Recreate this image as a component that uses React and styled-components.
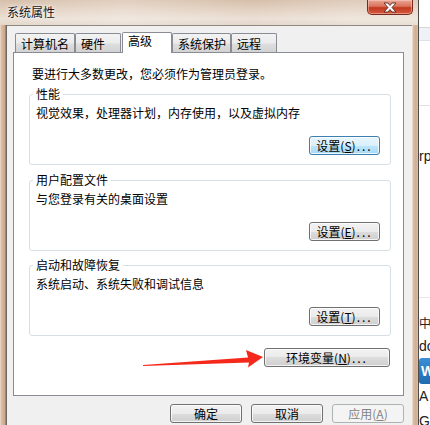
import React from "react";
import styled, { createGlobalStyle } from "styled-components";

const GlobalStyle = createGlobalStyle`
  html, body {
    margin: 0;
    padding: 0;
  }
  body {
    width: 430px;
    height: 425px;
    overflow: hidden;
    background: #fff;
    font-family: "Noto Sans CJK SC", "Noto Sans", sans-serif;
    font-size: 12px;
    color: #000;
  }
`;

const Screen = styled.div`
  position: relative;
  display: flex;
  width: 430px;
  height: 425px;
  overflow: hidden;
`;

const Window = styled.div`
  width: 419px;
  height: 425px;
  display: flex;
  flex-direction: column;
  border-right: 1px solid #4e4a47;
  box-sizing: border-box;
`;

const TitleBar = styled.div`
  height: 25px;
  box-sizing: border-box;
  display: flex;
  justify-content: space-between;
  align-items: flex-start;
  padding-left: 7px;
  background: linear-gradient(
      90deg,
      rgba(255, 255, 255, 0) 0%,
      rgba(255, 255, 255, 0.25) 30%,
      rgba(255, 255, 255, 0) 60%,
      rgba(255, 255, 255, 0.2) 85%
    ),
    linear-gradient(180deg, #d6bfaa 0%, #e3d1c1 40%, #ebe0d6 75%, #e4d6c9 100%);
`;

const Title = styled.div`
  margin-top: 4px;
  line-height: 16px;
  font-size: 12px;
  color: #151515;
  text-shadow: 0 0 5px rgba(255, 255, 255, 0.95), 0 0 2px rgba(255, 255, 255, 0.9);
`;

const CloseButton = styled.div`
  width: 46px;
  height: 15px;
  margin-right: 5px;
  box-sizing: border-box;
  border: 1px solid #7a2a1c;
  border-top: none;
  border-radius: 0 0 5px 5px;
  background: linear-gradient(180deg, #e9a594 0%, #d9735c 45%, #c2391f 55%, #d35a3c 100%);
  box-shadow: inset 0 0 0 1px rgba(255, 220, 210, 0.45);
  display: flex;
  align-items: center;
  justify-content: center;
`;

const Body = styled.div`
  flex: 1;
  display: flex;
`;

const LeftFrame = styled.div`
  width: 7px;
  background: linear-gradient(90deg, #ead8c8 0px, #d6b79d 2px, #cba88c 5px, #6e6862 6px, #6e6862 7px);
`;

const RightFrame = styled.div`
  width: 6px;
  background: linear-gradient(90deg, #f4ede6 0px, #dcc0a8 1px, #cfae93 4px, #d9bea6 6px);
`;

const Client = styled.div`
  width: 405px;
  box-sizing: border-box;
  background: #f0f0f0;
  border-top: 1px solid #8f8882;
  padding: 6px 0 0 6px;
  display: flex;
  flex-direction: column;
`;

const TabRow = styled.div`
  height: 20px;
  display: flex;
  align-items: flex-end;
  padding-left: 2px;
`;

const Tab = styled.div`
  width: ${(p) => p.$w}px;
  height: ${(p) => (p.$active ? 21 : 19)}px;
  box-sizing: border-box;
  margin-left: ${(p) => (p.$active ? 1 : 0)}px;
  margin-bottom: ${(p) => (p.$active ? -1 : 0)}px;
  position: ${(p) => (p.$active ? "relative" : "static")};
  z-index: ${(p) => (p.$active ? 1 : 0)};
  border: 1px solid #898c95;
  border-bottom: none;
  border-radius: 2px 2px 0 0;
  padding: ${(p) => (p.$active ? "0 0 0 5px" : "2px 0 0 5px")};
  line-height: 16px;
  white-space: nowrap;
  background: ${(p) =>
    p.$active ? "#fff" : "linear-gradient(180deg, #f3f3f3 0%, #ebebeb 50%, #dedede 55%, #d2d2d2 100%)"};
`;

const Panel = styled.div`
  width: 391px;
  height: 344px;
  box-sizing: border-box;
  border: 1px solid #898c95;
  background: #fff;
  padding: 13px 12px 0 15px;
  display: flex;
  flex-direction: column;
`;

const Intro = styled.div`
  line-height: 16px;
  margin-left: 3px;
`;

const Group = styled.fieldset`
  margin: ${(p) => p.$top}px 0 0 0;
  padding: 5px 10px 9px 6px;
  border: 1px solid #d5dfe5;
  border-radius: 3px;
  min-width: 0;
  display: flex;
  flex-direction: column;
`;

const GroupLabel = styled.legend`
  padding: 0 3px;
  margin-left: -3px;
  line-height: 12px;
  font-size: 12px;
`;

const GroupText = styled.div`
  line-height: 16px;
`;

const Button = styled.div`
  width: ${(p) => p.$w}px;
  height: 19px;
  box-sizing: border-box;
  border: 1px solid ${(p) => (p.$focus ? "#3c7fb1" : p.$disabled ? "#adb2b5" : "#707070")};
  border-radius: 3px;
  background: ${(p) =>
    p.$disabled
      ? "#f4f4f4"
      : p.$focus
      ? "linear-gradient(180deg, #eaf6fd 0%, #d9f0fc 50%, #bee6fd 50%, #a7d9f5 100%)"
      : "linear-gradient(180deg, #f2f2f2 0%, #ebebeb 50%, #dddddd 50%, #cfcfcf 100%)"};
  box-shadow: inset 0 0 0 1px ${(p) => (p.$disabled ? "#f4f4f4" : "rgba(255, 255, 255, 0.75)")};
  color: ${(p) => (p.$disabled ? "#838383" : "#000")};
  display: flex;
  align-items: center;
  justify-content: center;
  line-height: 17px;
  white-space: nowrap;
  align-self: ${(p) => (p.$end ? "flex-end" : "auto")};
  margin-top: ${(p) => p.$mt || 0}px;
  margin-right: ${(p) => p.$mr || 0}px;
`;

const Key = styled.span`
  text-decoration: underline;
`;

const Dots = styled.span`
  letter-spacing: 2px;
  margin-left: 1px;
`;

const Footer = styled.div`
  width: 391px;
  margin-top: 8px;
  display: flex;
  justify-content: flex-end;
  gap: 9px;
`;

const Arrow = styled.svg`
  position: absolute;
  left: 140px;
  top: 345px;
`;

const PageStrip = styled.div`
  width: 11px;
  height: 425px;
  background: #fff;
  display: flex;
  flex-direction: column;
  overflow: hidden;
  font-family: "Liberation Sans", Arial, sans-serif;
  font-size: 14px;
  color: #222;
`;

const StripBand = styled.div`
  height: ${(p) => p.$h}px;
  margin-top: ${(p) => p.$mt}px;
  background: ${(p) => p.$bg};
  flex-shrink: 0;
`;

const StripText = styled.div`
  margin-top: ${(p) => p.$mt}px;
  line-height: 16px;
  white-space: nowrap;
  color: ${(p) => p.$color || "#222"};
  font-family: ${(p) => (p.$cjk ? '"Noto Sans CJK SC", sans-serif' : "inherit")};
  font-size: ${(p) => (p.$cjk ? 12 : 14)}px;
`;

const StripIcon = styled.div`
  margin-top: ${(p) => p.$mt}px;
  width: 14px;
  height: 26px;
  border-radius: 3px;
  background: linear-gradient(180deg, #3a8fd6 0%, #1f6bb0 100%);
  color: #fff;
  font-weight: bold;
  font-size: 14px;
  line-height: 26px;
  padding-left: 2px;
  box-sizing: border-box;
  flex-shrink: 0;
`;

const Label = ({ text, k }) => (
  <>
    {text}(<Key>{k}</Key>)<Dots>...</Dots>
  </>
);

const tabs = [
  { name: "计算机名", w: 60 },
  { name: "硬件", w: 46 },
  { name: "高级", w: 50, active: true },
  { name: "系统保护", w: 59 },
  { name: "远程", w: 46 },
];

const App = () => {
  return (
    <Screen>
      <GlobalStyle />
      <Window>
        <TitleBar>
          <Title>系统属性</Title>
          <CloseButton>
            <svg width="16" height="11" viewBox="0 0 16 11">
              <path
                d="M2 1 L6 1 L8 3.5 L10 1 L14 1 L10 5.5 L14 10 L10 10 L8 7.5 L6 10 L2 10 L6 5.5 Z"
                fill="#fff"
                stroke="#5a2a22"
                strokeWidth="0.9"
                strokeLinejoin="round"
              />
            </svg>
          </CloseButton>
        </TitleBar>
        <Body>
          <LeftFrame />
          <Client>
            <TabRow>
              {tabs.map((t) => (
                <Tab key={t.name} $w={t.w} $active={t.active}>
                  {t.name}
                </Tab>
              ))}
            </TabRow>
            <Panel>
              <Intro>要进行大多数更改，您必须作为管理员登录。</Intro>
              <Group $top={6}>
                <GroupLabel>性能</GroupLabel>
                <GroupText>视觉效果，处理器计划，内存使用，以及虚拟内存</GroupText>
                <Button $w={71} $end $mt={15} $focus>
                  <Label text="设置" k="S" />
                </Button>
              </Group>
              <Group $top={9}>
                <GroupLabel>用户配置文件</GroupLabel>
                <GroupText>与您登录有关的桌面设置</GroupText>
                <Button $w={71} $end $mt={15}>
                  <Label text="设置" k="E" />
                </Button>
              </Group>
              <Group $top={8}>
                <GroupLabel>启动和故障恢复</GroupLabel>
                <GroupText>系统启动、系统失败和调试信息</GroupText>
                <Button $w={71} $end $mt={15}>
                  <Label text="设置" k="T" />
                </Button>
              </Group>
              <Button $w={126} $end $mt={12} $mr={1}>
                <Label text="环境变量" k="N" />
              </Button>
            </Panel>
            <Footer>
              <Button $w={72}>确定</Button>
              <Button $w={72}>取消</Button>
              <Button $w={72} $disabled>
                应用(<Key>A</Key>)
              </Button>
            </Footer>
          </Client>
          <RightFrame />
        </Body>
      </Window>
      <PageStrip>
        <StripBand $h={1} $mt={27} $bg="#d6d6d6" />
        <StripBand $h={12} $mt={0} $bg="#eef2f6" />
        <StripBand $h={1} $mt={0} $bg="#dde3ea" />
        <StripBand $h={1} $mt={64} $bg="#e2e2e2" />
        <StripText $mt={42}>rp</StripText>
        <StripBand $h={1} $mt={133} $bg="#e6e6e6" />
        <StripText $mt={17} $cjk>中</StripText>
        <StripText $mt={7}>do</StripText>
        <StripIcon $mt={4}>W</StripIcon>
        <StripText $mt={4}>A</StripText>
        <StripText $mt={9}>G</StripText>
      </PageStrip>
      <Arrow width="130" height="26" viewBox="0 0 130 26">
        <polygon
          points="3,20 108,12.5 106,5 123,12 108,22.5 109,17.5 3,21"
          fill="#f5291b"
        />
      </Arrow>
    </Screen>
  );
};

export default App;
